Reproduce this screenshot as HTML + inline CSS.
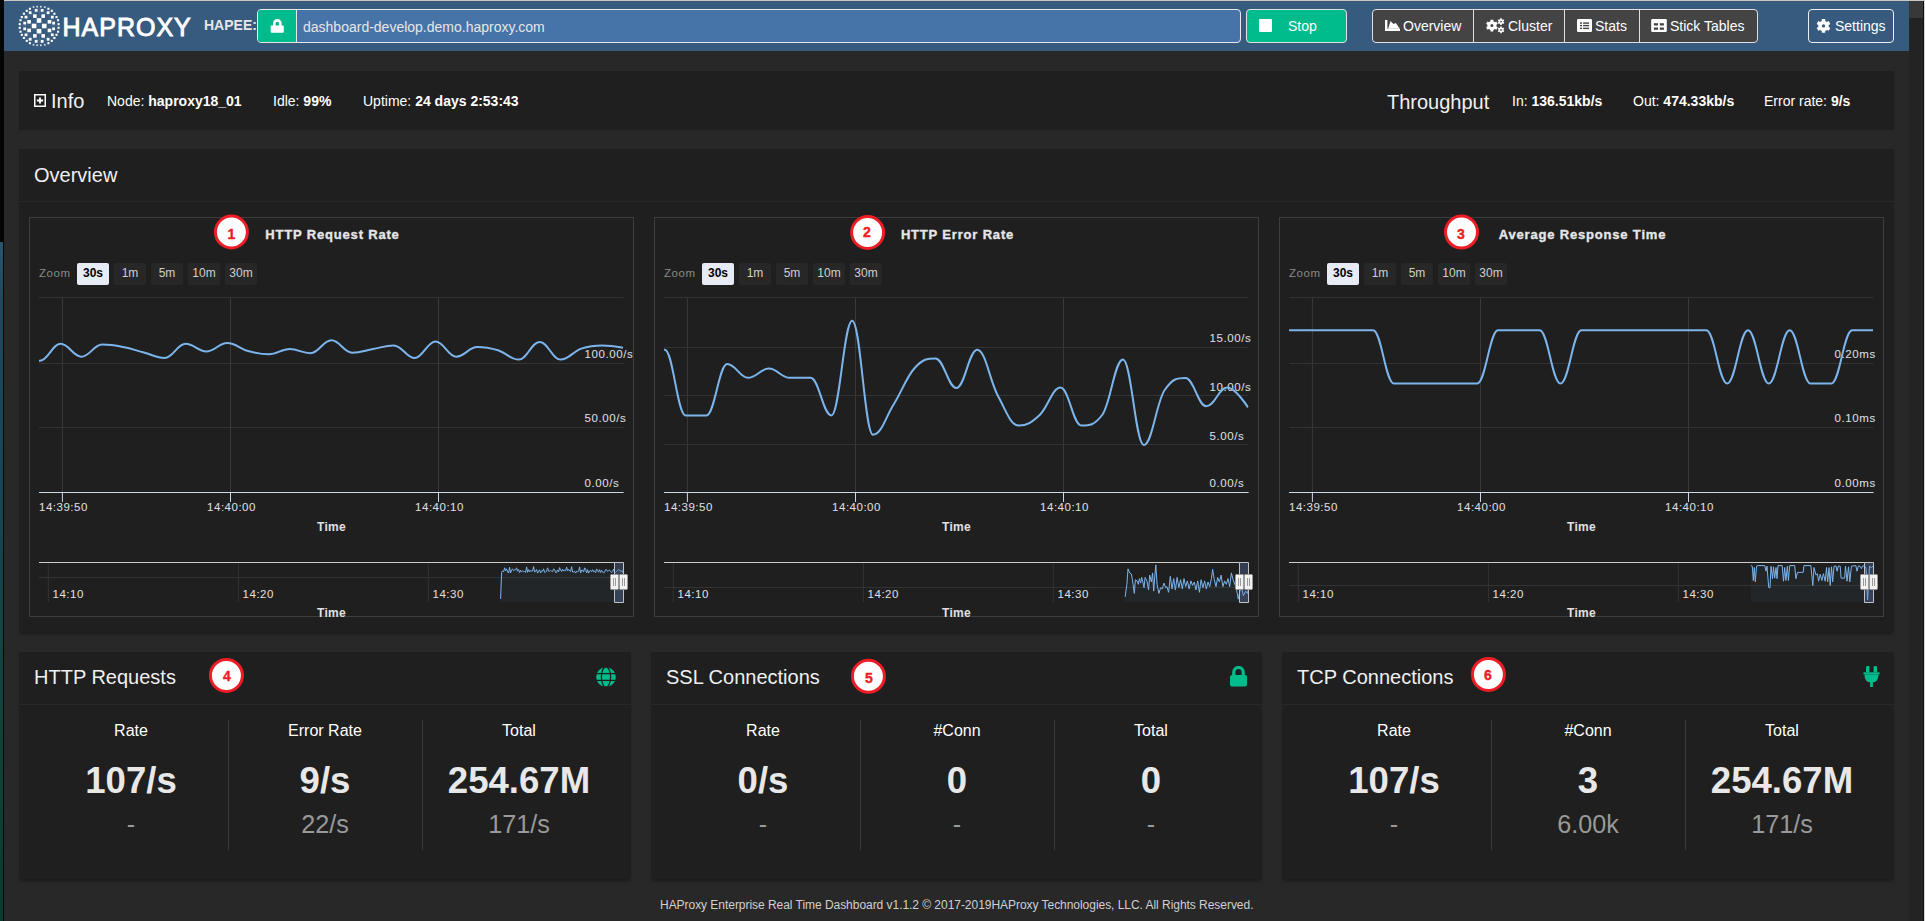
<!DOCTYPE html>
<html><head><meta charset="utf-8"><title>HAProxy Dashboard</title>
<style>
*{box-sizing:border-box}
html,body{margin:0;padding:0;width:1925px;height:921px;overflow:hidden;background:#282828;font-family:"Liberation Sans",sans-serif;color:#fff}
.abs{position:absolute}
#topline{left:0;top:0;width:1925px;height:1px;background:#c9c6c4}
#lstrip{left:0;top:0;width:4px;height:921px;background:#050505}
#lstrip2{left:0;top:242px;width:3px;height:679px;background:linear-gradient(#2a566b 0,#1b4b5b 9%,#194555 35%,#114236 75%,#0b3a2e)}
#nav{left:4px;top:1px;width:1905px;height:50px;background:#375a7f}
#sb{left:1909px;top:1px;width:15px;height:920px;background:#232323}
#sbtop{left:1909px;top:1px;width:15px;height:17px;background:#383838}
#sbedge{left:1923px;top:1px;width:1px;height:920px;background:#111}
#rline{left:1924px;top:0;width:1px;height:921px;background:#d4d4d4}
.brand{left:62.5px;top:11.5px;font:25px "Liberation Sans",sans-serif;-webkit-text-stroke:0.9px #fff;letter-spacing:1px;color:#fff;line-height:30px}
.hapee{left:204px;top:17px;font:bold 14px "Liberation Sans",sans-serif;color:#e6e6e6;line-height:16px}
.ig{left:257px;top:9px;width:984px;height:34px;border:1px solid #e8e8e8;border-radius:4px;overflow:hidden;background:#4673a8}
.ig .lock{position:absolute;left:0;top:0;width:39px;height:32px;background:#00bc8c;border-right:1px solid #e8e8e8}
.ig .url{position:absolute;left:45px;top:8.5px;font:14px "Liberation Sans",sans-serif;color:#e6e6e6;line-height:16px}
.btn-stop{left:1246px;top:9px;width:101px;height:34px;border:1px solid #e0e0e0;border-radius:4px;background:#00bc8c}
.btn-stop .sq{position:absolute;left:12px;top:9px;width:13px;height:13px;background:#fff;border-radius:1px}
.btn-stop .t{position:absolute;left:41px;top:8px;font:14px "Liberation Sans",sans-serif;color:#fff;line-height:16px}
.grp{left:1372px;top:9px;width:386px;height:34px;border:1px solid #e0e0e0;border-radius:4px;background:#444;overflow:hidden}
.grp .div{position:absolute;top:0;width:1px;height:32px;background:#e0e0e0}
.navt{position:absolute;font:14px "Liberation Sans",sans-serif;color:#fff;line-height:16px;top:8px;white-space:nowrap}
.btn-set{left:1808px;top:9px;width:86px;height:34px;border:1px solid #f0f0f0;border-radius:4px}
.card{position:absolute;background:#1f1f1f;box-shadow:0 3px 3px -1px rgba(0,0,0,.35)}
.t14{position:absolute;font:14px "Liberation Sans",sans-serif;color:#fff;line-height:16px;white-space:nowrap}
.t14 b{font-weight:bold}
.h20{position:absolute;font:20px "Liberation Sans",sans-serif;color:#f0f0f0;line-height:22px;white-space:nowrap}
.sep{position:absolute;width:1px;background:#3a3a3a;top:720px;height:130px}
.lab{position:absolute;width:194px;text-align:center;font:16px "Liberation Sans",sans-serif;color:#fff;line-height:18px;top:722px}
.big{position:absolute;width:194px;text-align:center;font:bold 36.6px "Liberation Sans",sans-serif;color:#e8e8e8;line-height:40px;top:761px}
.sub{position:absolute;width:194px;text-align:center;font:25.2px "Liberation Sans",sans-serif;color:#999;line-height:28px;top:809.6px}
.circ{position:absolute;width:34px;height:34px;border:2.8px solid #e3151d;border-radius:50%;background:#fff;color:#e3151d;font:bold 14px "Liberation Sans",sans-serif;text-align:center;line-height:28px}
.foot{left:660px;top:897.5px;font:12px "Liberation Sans",sans-serif;color:#d0d0d0;line-height:14px;white-space:nowrap;letter-spacing:-0.04px}
</style></head>
<body>
<div class="abs" id="topline"></div>
<div class="abs" id="nav"></div>
<div class="abs" id="lstrip"></div>
<div class="abs" id="lstrip2"></div>
<div class="abs" id="sb"></div>
<div class="abs" id="sbtop"></div>
<div class="abs" id="sbedge"></div>
<div class="abs" id="rline"></div>

<!-- navbar content -->
<svg style="position:absolute;left:0;top:0" width="70" height="52"><rect x="32.70" y="6.10" width="1.70" height="1.70" fill="#fff" opacity="0.8"/><rect x="36.35" y="5.84" width="1.70" height="1.70" fill="#fff" opacity="0.8"/><rect x="40.00" y="5.84" width="1.70" height="1.70" fill="#fff" opacity="0.8"/><rect x="43.91" y="6.36" width="1.70" height="1.70" fill="#fff" opacity="0.8"/><rect x="32.70" y="43.90" width="1.70" height="1.70" fill="#fff" opacity="0.8"/><rect x="36.35" y="44.42" width="1.70" height="1.70" fill="#fff" opacity="0.8"/><rect x="40.00" y="44.42" width="1.70" height="1.70" fill="#fff" opacity="0.8"/><rect x="43.91" y="43.90" width="1.70" height="1.70" fill="#fff" opacity="0.8"/><rect x="28.85" y="7.73" width="2.10" height="2.10" fill="#fff" opacity="1"/><rect x="47.36" y="7.73" width="2.10" height="2.10" fill="#fff" opacity="1"/><rect x="25.72" y="9.81" width="2.10" height="2.10" fill="#fff" opacity="1"/><rect x="50.75" y="9.81" width="2.10" height="2.10" fill="#fff" opacity="1"/><rect x="22.86" y="12.68" width="2.10" height="2.10" fill="#fff" opacity="1"/><rect x="53.36" y="12.68" width="2.10" height="2.10" fill="#fff" opacity="1"/><rect x="20.77" y="16.07" width="2.10" height="2.10" fill="#fff" opacity="1"/><rect x="55.44" y="16.07" width="2.10" height="2.10" fill="#fff" opacity="1"/><rect x="19.47" y="19.20" width="2.10" height="2.10" fill="#fff" opacity="1"/><rect x="57.01" y="19.20" width="2.10" height="2.10" fill="#fff" opacity="1"/><rect x="18.69" y="23.11" width="2.10" height="2.10" fill="#fff" opacity="1"/><rect x="57.53" y="23.11" width="2.10" height="2.10" fill="#fff" opacity="1"/><rect x="18.69" y="26.76" width="2.10" height="2.10" fill="#fff" opacity="1"/><rect x="57.53" y="26.76" width="2.10" height="2.10" fill="#fff" opacity="1"/><rect x="19.47" y="30.67" width="2.10" height="2.10" fill="#fff" opacity="1"/><rect x="57.01" y="30.67" width="2.10" height="2.10" fill="#fff" opacity="1"/><rect x="20.77" y="33.80" width="2.10" height="2.10" fill="#fff" opacity="1"/><rect x="55.44" y="33.80" width="2.10" height="2.10" fill="#fff" opacity="1"/><rect x="22.86" y="36.92" width="2.10" height="2.10" fill="#fff" opacity="1"/><rect x="53.36" y="36.92" width="2.10" height="2.10" fill="#fff" opacity="1"/><rect x="25.72" y="39.79" width="2.10" height="2.10" fill="#fff" opacity="1"/><rect x="50.75" y="39.79" width="2.10" height="2.10" fill="#fff" opacity="1"/><rect x="28.85" y="42.14" width="2.10" height="2.10" fill="#fff" opacity="1"/><rect x="47.36" y="42.14" width="2.10" height="2.10" fill="#fff" opacity="1"/><rect x="34.76" y="8.94" width="2.80" height="2.80" fill="#fff" opacity="1"/><rect x="40.75" y="8.94" width="2.80" height="2.80" fill="#fff" opacity="1"/><rect x="28.76" y="11.29" width="2.80" height="2.80" fill="#fff" opacity="1"/><rect x="46.75" y="11.29" width="2.80" height="2.80" fill="#fff" opacity="1"/><rect x="24.59" y="15.72" width="2.80" height="2.80" fill="#fff" opacity="1"/><rect x="50.92" y="15.72" width="2.80" height="2.80" fill="#fff" opacity="1"/><rect x="23.29" y="21.72" width="2.80" height="2.80" fill="#fff" opacity="1"/><rect x="52.22" y="21.72" width="2.80" height="2.80" fill="#fff" opacity="1"/><rect x="23.29" y="27.45" width="2.80" height="2.80" fill="#fff" opacity="1"/><rect x="52.22" y="27.45" width="2.80" height="2.80" fill="#fff" opacity="1"/><rect x="24.59" y="33.45" width="2.80" height="2.80" fill="#fff" opacity="1"/><rect x="50.92" y="33.45" width="2.80" height="2.80" fill="#fff" opacity="1"/><rect x="28.76" y="37.88" width="2.80" height="2.80" fill="#fff" opacity="1"/><rect x="46.75" y="37.88" width="2.80" height="2.80" fill="#fff" opacity="1"/><rect x="34.76" y="39.96" width="2.80" height="2.80" fill="#fff" opacity="1"/><rect x="40.75" y="39.96" width="2.80" height="2.80" fill="#fff" opacity="1"/><rect x="33.06" y="14.28" width="3.60" height="3.60" fill="#fff" opacity="1"/><rect x="41.40" y="14.28" width="3.60" height="3.60" fill="#fff" opacity="1"/><rect x="27.32" y="20.01" width="3.60" height="3.60" fill="#fff" opacity="1"/><rect x="47.65" y="20.01" width="3.60" height="3.60" fill="#fff" opacity="1"/><rect x="27.32" y="28.62" width="3.60" height="3.60" fill="#fff" opacity="1"/><rect x="47.65" y="28.62" width="3.60" height="3.60" fill="#fff" opacity="1"/><rect x="33.06" y="34.09" width="3.60" height="3.60" fill="#fff" opacity="1"/><rect x="41.40" y="34.09" width="3.60" height="3.60" fill="#fff" opacity="1"/><rect x="36.73" y="18.21" width="4.60" height="4.60" fill="#fff" opacity="1"/><rect x="31.77" y="23.68" width="4.60" height="4.60" fill="#fff" opacity="1"/><rect x="41.94" y="23.68" width="4.60" height="4.60" fill="#fff" opacity="1"/><rect x="36.73" y="28.90" width="4.60" height="4.60" fill="#fff" opacity="1"/><g stroke="#fff" stroke-opacity="0.12" stroke-width="0.8" fill="none"><circle cx="39.2" cy="25.8" r="14"/><line x1="21" y1="25.8" x2="57" y2="25.8"/><line x1="39.2" y1="7" x2="39.2" y2="45"/></g></svg>
<div class="abs brand">HAPROXY</div>
<div class="abs hapee">HAPEE:</div>
<div class="abs ig">
  <div class="lock">
    <svg style="position:absolute;left:12px;top:7px" width="15" height="17" viewBox="0 0 15 17"><path d="M4.25 9V6.45A3.05 3.05 0 0 1 10.35 6.45V9" fill="none" stroke="#fff" stroke-width="2.6"/><rect x="0.7" y="8.6" width="13.1" height="7.1" rx="1" fill="#fff"/></svg>
  </div>
  <div class="url">dashboard-develop.demo.haproxy.com</div>
</div>
<div class="abs btn-stop"><div class="sq"></div><div class="t">Stop</div></div>
<div class="abs grp">
  <div class="div" style="left:100px"></div>
  <div class="div" style="left:191px"></div>
  <div class="div" style="left:266px"></div>
  <svg style="position:absolute;left:12px;top:10px" width="15" height="11" viewBox="0 0 15 11"><g fill="#fff"><rect x="0" y="0" width="2.4" height="11"/><rect x="0" y="8.7" width="15" height="2.3"/><path d="M3.2 8.8L5.5 0.9 8.4 4.1 10.8 2.9 14.8 8.8z"/></g></svg>
  <div class="navt" style="left:30px">Overview</div>
  <svg style="position:absolute;left:112px;top:8px" width="20" height="16" viewBox="0 0 20 16"><path fill="#fff" fill-rule="evenodd" d="M5.41 3.25 L5.48 1.67 L8.32 1.67 L8.39 3.25 L9.92 4.13 L11.32 3.40 L12.75 5.87 L11.41 6.71 L11.41 8.49 L12.75 9.33 L11.32 11.80 L9.92 11.07 L8.39 11.95 L8.32 13.53 L5.48 13.53 L5.41 11.95 L3.88 11.07 L2.48 11.80 L1.05 9.33 L2.39 8.49 L2.39 6.71 L1.05 5.87 L2.48 3.40 L3.88 4.13ZM5.40 7.60 a1.50 1.50 0 1 0 3.00 0 a1.50 1.50 0 1 0 -3.00 0ZM15.19 1.23 L15.21 0.29 L16.79 0.29 L16.81 1.23 L17.64 1.72 L18.47 1.26 L19.26 2.63 L18.45 3.12 L18.45 4.08 L19.26 4.57 L18.47 5.94 L17.64 5.48 L16.81 5.97 L16.79 6.91 L15.21 6.91 L15.19 5.97 L14.36 5.48 L13.53 5.94 L12.74 4.57 L13.55 4.08 L13.55 3.12 L12.74 2.63 L13.53 1.26 L14.36 1.72ZM15.10 3.60 a0.90 0.90 0 1 0 1.80 0 a0.90 0.90 0 1 0 -1.80 0ZM15.19 9.53 L15.21 8.59 L16.79 8.59 L16.81 9.53 L17.64 10.02 L18.47 9.56 L19.26 10.93 L18.45 11.42 L18.45 12.38 L19.26 12.87 L18.47 14.24 L17.64 13.78 L16.81 14.27 L16.79 15.21 L15.21 15.21 L15.19 14.27 L14.36 13.78 L13.53 14.24 L12.74 12.87 L13.55 12.38 L13.55 11.42 L12.74 10.93 L13.53 9.56 L14.36 10.02ZM15.10 11.90 a0.90 0.90 0 1 0 1.80 0 a0.90 0.90 0 1 0 -1.80 0Z"/></svg>
  <div class="navt" style="left:135px">Cluster</div>
  <svg style="position:absolute;left:204px;top:9px" width="15" height="13" viewBox="0 0 15 13"><rect x="0" y="0" width="15" height="13" rx="1.2" fill="#fff"/><g fill="#444"><rect x="3" y="3.4" width="2" height="1.4"/><rect x="3" y="5.9" width="2" height="1.4"/><rect x="3" y="8.7" width="2" height="1.4"/><rect x="6.1" y="3.4" width="6" height="1.4"/><rect x="6.1" y="5.9" width="6" height="1.4"/><rect x="6.1" y="8.7" width="6" height="1.4"/></g></svg>
  <div class="navt" style="left:222px">Stats</div>
  <svg style="position:absolute;left:278px;top:9px" width="16" height="13" viewBox="0 0 16 13"><rect x="0.2" y="0" width="15.6" height="13" rx="1.2" fill="#fff"/><g fill="#444"><rect x="2.9" y="4.2" width="4.1" height="2.3"/><rect x="8.8" y="4.2" width="4.1" height="2.3"/><rect x="2.9" y="8.5" width="4.1" height="2.3"/><rect x="8.8" y="8.5" width="4.1" height="2.3"/></g></svg>
  <div class="navt" style="left:297px">Stick Tables</div>
</div>
<div class="abs btn-set">
  <svg style="position:absolute;left:7px;top:9px" width="16" height="15" viewBox="0 0 16 15"><path fill="#fff" fill-rule="evenodd" d="M5.78 1.89 L5.84 -0.00 L9.16 -0.00 L9.22 1.89 L10.98 2.91 L12.65 2.01 L14.31 4.88 L12.70 5.88 L12.70 7.92 L14.31 8.92 L12.65 11.79 L10.98 10.89 L9.22 11.91 L9.16 13.80 L5.84 13.80 L5.78 11.91 L4.02 10.89 L2.35 11.79 L0.69 8.92 L2.30 7.92 L2.30 5.88 L0.69 4.88 L2.35 2.01 L4.02 2.91ZM5.80 6.90 a1.70 1.70 0 1 0 3.40 0 a1.70 1.70 0 1 0 -3.40 0Z"/></svg>
  <div class="navt" style="left:26px">Settings</div>
</div>

<!-- Info card -->
<div class="card" style="left:19px;top:71px;width:1875px;height:58px;box-shadow:0 1px 1px rgba(0,0,0,.2)"></div>
<svg class="abs" style="left:34px;top:94px" width="12" height="13" viewBox="0 0 12 13"><rect x="0.75" y="0.75" width="10.5" height="11.5" fill="none" stroke="#fff" stroke-width="1.5"/><path d="M6 3.4v6.2M2.9 6.5h6.2" stroke="#fff" stroke-width="1.9"/></svg>
<div class="h20" style="left:51px;top:90px">Info</div>
<div class="t14" style="left:107px;top:93px">Node: <b>haproxy18_01</b></div>
<div class="t14" style="left:273px;top:93px">Idle: <b>99%</b></div>
<div class="t14" style="left:363px;top:93px">Uptime: <b>24 days 2:53:43</b></div>
<div class="h20" style="left:1387px;top:91px">Throughput</div>
<div class="t14" style="left:1512px;top:93px">In: <b>136.51kb/s</b></div>
<div class="t14" style="left:1633px;top:93px">Out: <b>474.33kb/s</b></div>
<div class="t14" style="left:1764px;top:93px">Error rate: <b>9/s</b></div>

<!-- Overview card -->
<div class="card" style="left:19px;top:149px;width:1875px;height:483px"></div>
<div class="abs" style="left:19px;top:201px;width:1875px;height:1px;background:#282828"></div>
<div class="h20" style="left:34px;top:164px">Overview</div>
<svg class="abs" style="left:0;top:0" width="1925" height="921" font-family="Liberation Sans, sans-serif"><rect x="29.5" y="217.5" width="604.0" height="399.0" fill="none" stroke="#3d3d3d" stroke-width="1"/><text x="332.5" y="238.8" text-anchor="middle" font-size="13" font-weight="bold" fill="#e6e6e8" stroke="#e6e6e8" stroke-width="0.35" letter-spacing="0.82">HTTP Request Rate</text><text x="39.0" y="277.3" font-size="11.5" fill="#8a8a8a" letter-spacing="0.6">Zoom</text><rect x="77.0" y="263" width="32" height="22" rx="2" fill="#e6ebf5"/><text x="93.0" y="277.1" text-anchor="middle" font-size="12" font-weight="bold" fill="#000">30s</text><rect x="114.0" y="263" width="32" height="22" rx="2" fill="#272727"/><text x="130.0" y="277.1" text-anchor="middle" font-size="12" fill="#cfcfcf">1m</text><rect x="151.0" y="263" width="32" height="22" rx="2" fill="#272727"/><text x="167.0" y="277.1" text-anchor="middle" font-size="12" fill="#cfcfcf">5m</text><rect x="188.0" y="263" width="32" height="22" rx="2" fill="#272727"/><text x="204.0" y="277.1" text-anchor="middle" font-size="12" fill="#cfcfcf">10m</text><rect x="225.0" y="263" width="32" height="22" rx="2" fill="#272727"/><text x="241.0" y="277.1" text-anchor="middle" font-size="12" fill="#cfcfcf">30m</text><line x1="62.4" y1="297" x2="62.4" y2="492" stroke="#3a3a3a" stroke-width="1"/><line x1="230.5" y1="297" x2="230.5" y2="492" stroke="#3a3a3a" stroke-width="1"/><line x1="438.5" y1="297" x2="438.5" y2="492" stroke="#3a3a3a" stroke-width="1"/><line x1="39.0" y1="297.5" x2="623.6" y2="297.5" stroke="#333" stroke-width="1"/><line x1="39.0" y1="363.5" x2="623.6" y2="363.5" stroke="#333" stroke-width="1"/><line x1="39.0" y1="427.5" x2="623.6" y2="427.5" stroke="#333" stroke-width="1"/><line x1="39.0" y1="492.5" x2="623.6" y2="492.5" stroke="#ccd6eb" stroke-width="1"/><line x1="62.4" y1="492" x2="62.4" y2="502" stroke="#ccd6eb" stroke-width="1"/><line x1="230.5" y1="492" x2="230.5" y2="502" stroke="#ccd6eb" stroke-width="1"/><line x1="438.5" y1="492" x2="438.5" y2="502" stroke="#ccd6eb" stroke-width="1"/><text x="63.4" y="511" text-anchor="middle" font-size="11.5" fill="#e0e0e3" letter-spacing="0.5">14:39:50</text><text x="231.5" y="511" text-anchor="middle" font-size="11.5" fill="#e0e0e3" letter-spacing="0.5">14:40:00</text><text x="439.5" y="511" text-anchor="middle" font-size="11.5" fill="#e0e0e3" letter-spacing="0.5">14:40:10</text><text x="331.5" y="531" text-anchor="middle" font-size="12" font-weight="bold" fill="#e0e0e3" letter-spacing="0.3">Time</text><text x="584.5" y="358.3" font-size="11.5" fill="#e0e0e3" letter-spacing="0.6">100.00/s</text><text x="584.5" y="422.3" font-size="11.5" fill="#e0e0e3" letter-spacing="0.6">50.00/s</text><text x="584.5" y="487.3" font-size="11.5" fill="#e0e0e3" letter-spacing="0.6">0.00/s</text><clipPath id="c29"><rect x="39.0" y="297" width="584.6" height="196"/></clipPath><path d="M18.9 352.0C18.9 352.0 31.4 360.7 39.8 360.7C48.1 360.7 52.2 343.8 60.6 343.8C68.9 343.8 73.1 356.7 81.4 356.7C89.7 356.7 93.9 344.6 102.2 344.6C110.6 344.6 114.7 345.4 123.1 347.0C131.4 348.6 135.6 350.3 143.9 352.5C152.2 354.7 156.4 358.0 164.7 358.0C173.1 358.0 177.2 343.8 185.6 343.8C193.9 343.8 198.1 351.5 206.4 351.5C214.7 351.5 218.9 343.0 227.2 343.0C235.6 343.0 239.7 348.7 248.0 351.0C256.4 353.3 260.5 354.3 268.9 354.3C277.2 354.3 281.4 349.0 289.7 349.0C298.0 349.0 302.2 353.2 310.5 353.2C318.9 353.2 323.0 340.3 331.4 340.3C339.7 340.3 343.9 352.7 352.2 352.7C360.5 352.7 364.7 350.5 373.0 349.0C381.4 347.5 385.5 345.4 393.9 345.4C402.2 345.4 406.4 358.0 414.7 358.0C423.0 358.0 427.2 341.4 435.5 341.4C443.9 341.4 448.0 356.7 456.3 356.7C464.7 356.7 468.8 347.0 477.2 347.0C485.5 347.0 489.7 347.8 498.0 350.3C506.3 352.8 510.5 359.6 518.8 359.6C527.2 359.6 531.3 341.9 539.7 341.9C548.0 341.9 552.2 359.6 560.5 359.6C568.8 359.6 573.0 351.4 581.3 348.6C589.7 345.8 593.8 345.4 602.2 345.4C610.5 345.4 623.0 347.8 623.0 347.8" fill="none" stroke="#7cb5ec" stroke-width="2" stroke-linejoin="round" clip-path="url(#c29)"/><line x1="48.3" y1="562.5" x2="48.3" y2="602.0" stroke="#333" stroke-width="1"/><line x1="238.4" y1="562.5" x2="238.4" y2="602.0" stroke="#333" stroke-width="1"/><line x1="428.3" y1="562.5" x2="428.3" y2="602.0" stroke="#333" stroke-width="1"/><line x1="39.0" y1="577.5" x2="623.6" y2="577.5" stroke="#333" stroke-width="1"/><text x="52.5" y="598" font-size="11.5" fill="#e0e0e3" letter-spacing="0.5">14:10</text><text x="242.6" y="598" font-size="11.5" fill="#e0e0e3" letter-spacing="0.5">14:20</text><text x="432.5" y="598" font-size="11.5" fill="#e0e0e3" letter-spacing="0.5">14:30</text><clipPath id="p29"><rect x="29.0" y="217" width="604" height="399"/></clipPath><text x="331.5" y="617" text-anchor="middle" font-size="12" font-weight="bold" fill="#e0e0e3" letter-spacing="0.3">Time</text><path d="M500.6 599.0L501.6 572.2L502.6 571.0L503.6 571.7L504.6 567.8L505.6 570.7L506.6 568.8L507.6 572.0L508.6 573.0L509.6 567.3L510.6 572.9L511.6 569.8L512.6 568.9L513.6 570.7L514.6 569.8L515.6 569.8L516.6 567.8L517.6 571.2L518.6 569.6L519.6 572.6L520.6 570.3L521.6 571.9L522.6 570.7L523.6 571.7L524.6 571.4L525.6 572.5L526.6 566.9L527.6 572.3L528.6 569.6L529.6 571.9L530.6 570.4L531.6 571.0L532.6 571.1L533.6 566.6L534.6 571.9L535.6 571.4L536.6 569.5L537.6 573.1L538.6 571.2L539.6 569.8L540.6 573.0L541.6 570.8L542.6 571.2L543.6 568.8L544.6 572.4L545.6 572.1L546.6 571.1L547.6 567.8L548.6 571.3L549.6 571.0L550.6 570.4L551.6 571.2L552.6 571.5L553.6 568.9L554.6 569.6L555.6 572.6L556.6 572.3L557.6 569.9L558.6 571.8L559.6 567.6L560.6 569.9L561.6 571.5L562.6 569.1L563.6 571.1L564.6 570.0L565.6 570.8L566.6 567.1L567.6 570.7L568.6 569.3L569.6 571.0L570.6 571.5L571.6 566.7L572.6 572.0L573.6 571.9L574.6 571.2L575.6 573.1L576.6 571.1L577.6 571.7L578.6 571.3L579.6 566.9L580.6 573.1L581.6 570.1L582.6 570.2L583.6 572.1L584.6 567.8L585.6 569.0L586.6 573.0L587.6 569.6L588.6 573.1L589.6 571.0L590.6 570.3L591.6 571.8L592.6 569.7L593.6 571.7L594.6 571.0L595.6 572.6L596.6 568.9L597.6 570.2L598.6 572.2L599.6 569.7L600.6 572.5L601.6 570.3L602.6 571.8L603.6 573.1L604.6 572.0L605.6 569.5L606.6 569.7L607.6 571.4L608.6 570.4L609.6 570.1L610.6 571.5L611.6 572.7L612.6 571.2L613.6 569.0L614.6 572.6L615.6 572.4L616.6 571.5L617.6 570.5L618.6 569.8L619.6 570.0L620.6 571.3L621.6 570.8L622.6 572.3L623.6 568.9L623.6 602.0 L500.6 602.0 Z" fill="#7cb5ec" fill-opacity="0.05" stroke="none"/><path d="M500.6 599.0L501.6 572.2L502.6 571.0L503.6 571.7L504.6 567.8L505.6 570.7L506.6 568.8L507.6 572.0L508.6 573.0L509.6 567.3L510.6 572.9L511.6 569.8L512.6 568.9L513.6 570.7L514.6 569.8L515.6 569.8L516.6 567.8L517.6 571.2L518.6 569.6L519.6 572.6L520.6 570.3L521.6 571.9L522.6 570.7L523.6 571.7L524.6 571.4L525.6 572.5L526.6 566.9L527.6 572.3L528.6 569.6L529.6 571.9L530.6 570.4L531.6 571.0L532.6 571.1L533.6 566.6L534.6 571.9L535.6 571.4L536.6 569.5L537.6 573.1L538.6 571.2L539.6 569.8L540.6 573.0L541.6 570.8L542.6 571.2L543.6 568.8L544.6 572.4L545.6 572.1L546.6 571.1L547.6 567.8L548.6 571.3L549.6 571.0L550.6 570.4L551.6 571.2L552.6 571.5L553.6 568.9L554.6 569.6L555.6 572.6L556.6 572.3L557.6 569.9L558.6 571.8L559.6 567.6L560.6 569.9L561.6 571.5L562.6 569.1L563.6 571.1L564.6 570.0L565.6 570.8L566.6 567.1L567.6 570.7L568.6 569.3L569.6 571.0L570.6 571.5L571.6 566.7L572.6 572.0L573.6 571.9L574.6 571.2L575.6 573.1L576.6 571.1L577.6 571.7L578.6 571.3L579.6 566.9L580.6 573.1L581.6 570.1L582.6 570.2L583.6 572.1L584.6 567.8L585.6 569.0L586.6 573.0L587.6 569.6L588.6 573.1L589.6 571.0L590.6 570.3L591.6 571.8L592.6 569.7L593.6 571.7L594.6 571.0L595.6 572.6L596.6 568.9L597.6 570.2L598.6 572.2L599.6 569.7L600.6 572.5L601.6 570.3L602.6 571.8L603.6 573.1L604.6 572.0L605.6 569.5L606.6 569.7L607.6 571.4L608.6 570.4L609.6 570.1L610.6 571.5L611.6 572.7L612.6 571.2L613.6 569.0L614.6 572.6L615.6 572.4L616.6 571.5L617.6 570.5L618.6 569.8L619.6 570.0L620.6 571.3L621.6 570.8L622.6 572.3L623.6 568.9" fill="none" stroke="#7cb5ec" stroke-width="1"/><path d="M39.0 562.5 L614.5 562.5 L614.5 602.5 L623.5 602.5 L623.5 562.5" fill="none" stroke="#cccccc" stroke-width="1"/><line x1="614.5" y1="562.5" x2="623.5" y2="562.5" stroke="#cccccc" stroke-width="1"/><rect x="614.5" y="562.5" width="9" height="40.0" fill="#6685c2" fill-opacity="0.3"/><rect x="610.5" y="574.5" width="8" height="15" rx="1" fill="#f2f2f2" stroke="#999" stroke-width="1"/><line x1="613.5" y1="578" x2="613.5" y2="586" stroke="#999" stroke-width="1"/><line x1="615.5" y1="578" x2="615.5" y2="586" stroke="#999" stroke-width="1"/><rect x="619.5" y="574.5" width="8" height="15" rx="1" fill="#f2f2f2" stroke="#999" stroke-width="1"/><line x1="622.5" y1="578" x2="622.5" y2="586" stroke="#999" stroke-width="1"/><line x1="624.5" y1="578" x2="624.5" y2="586" stroke="#999" stroke-width="1"/><rect x="654.5" y="217.5" width="604.0" height="399.0" fill="none" stroke="#3d3d3d" stroke-width="1"/><text x="957.5" y="238.8" text-anchor="middle" font-size="13" font-weight="bold" fill="#e6e6e8" stroke="#e6e6e8" stroke-width="0.35" letter-spacing="0.82">HTTP Error Rate</text><text x="664.0" y="277.3" font-size="11.5" fill="#8a8a8a" letter-spacing="0.6">Zoom</text><rect x="702.0" y="263" width="32" height="22" rx="2" fill="#e6ebf5"/><text x="718.0" y="277.1" text-anchor="middle" font-size="12" font-weight="bold" fill="#000">30s</text><rect x="739.0" y="263" width="32" height="22" rx="2" fill="#272727"/><text x="755.0" y="277.1" text-anchor="middle" font-size="12" fill="#cfcfcf">1m</text><rect x="776.0" y="263" width="32" height="22" rx="2" fill="#272727"/><text x="792.0" y="277.1" text-anchor="middle" font-size="12" fill="#cfcfcf">5m</text><rect x="813.0" y="263" width="32" height="22" rx="2" fill="#272727"/><text x="829.0" y="277.1" text-anchor="middle" font-size="12" fill="#cfcfcf">10m</text><rect x="850.0" y="263" width="32" height="22" rx="2" fill="#272727"/><text x="866.0" y="277.1" text-anchor="middle" font-size="12" fill="#cfcfcf">30m</text><line x1="687.4" y1="297" x2="687.4" y2="492" stroke="#3a3a3a" stroke-width="1"/><line x1="855.5" y1="297" x2="855.5" y2="492" stroke="#3a3a3a" stroke-width="1"/><line x1="1063.5" y1="297" x2="1063.5" y2="492" stroke="#3a3a3a" stroke-width="1"/><line x1="664.0" y1="297.5" x2="1248.6" y2="297.5" stroke="#333" stroke-width="1"/><line x1="664.0" y1="347.5" x2="1248.6" y2="347.5" stroke="#333" stroke-width="1"/><line x1="664.0" y1="395.5" x2="1248.6" y2="395.5" stroke="#333" stroke-width="1"/><line x1="664.0" y1="444.5" x2="1248.6" y2="444.5" stroke="#333" stroke-width="1"/><line x1="664.0" y1="492.5" x2="1248.6" y2="492.5" stroke="#ccd6eb" stroke-width="1"/><line x1="687.4" y1="492" x2="687.4" y2="502" stroke="#ccd6eb" stroke-width="1"/><line x1="855.5" y1="492" x2="855.5" y2="502" stroke="#ccd6eb" stroke-width="1"/><line x1="1063.5" y1="492" x2="1063.5" y2="502" stroke="#ccd6eb" stroke-width="1"/><text x="688.4" y="511" text-anchor="middle" font-size="11.5" fill="#e0e0e3" letter-spacing="0.5">14:39:50</text><text x="856.5" y="511" text-anchor="middle" font-size="11.5" fill="#e0e0e3" letter-spacing="0.5">14:40:00</text><text x="1064.5" y="511" text-anchor="middle" font-size="11.5" fill="#e0e0e3" letter-spacing="0.5">14:40:10</text><text x="956.5" y="531" text-anchor="middle" font-size="12" font-weight="bold" fill="#e0e0e3" letter-spacing="0.3">Time</text><text x="1209.5" y="342.3" font-size="11.5" fill="#e0e0e3" letter-spacing="0.6">15.00/s</text><text x="1209.5" y="390.8" font-size="11.5" fill="#e0e0e3" letter-spacing="0.6">10.00/s</text><text x="1209.5" y="439.5" font-size="11.5" fill="#e0e0e3" letter-spacing="0.6">5.00/s</text><text x="1209.5" y="487.3" font-size="11.5" fill="#e0e0e3" letter-spacing="0.6">0.00/s</text><clipPath id="c654"><rect x="664.0" y="297" width="584.6" height="196"/></clipPath><path d="M643.9 362.0C643.9 362.0 656.4 349.7 664.8 349.7C673.1 349.7 677.2 415.4 685.6 415.4C693.9 415.4 698.1 415.4 706.4 415.4C714.7 415.4 718.9 364.0 727.2 364.0C735.6 364.0 739.7 377.8 748.1 377.8C756.4 377.8 760.6 368.6 768.9 368.6C777.2 368.6 781.4 377.8 789.7 377.8C798.1 377.8 802.2 377.8 810.6 377.8C818.9 377.8 823.1 415.4 831.4 415.4C839.7 415.4 843.9 320.8 852.2 320.8C860.6 320.8 864.7 434.7 873.0 434.7C881.4 434.7 885.5 417.3 893.9 404.0C902.2 390.7 906.4 377.1 914.7 368.0C923.0 358.9 927.2 358.4 935.5 358.4C943.9 358.4 948.0 388.0 956.4 388.0C964.7 388.0 968.9 349.7 977.2 349.7C985.5 349.7 989.7 380.8 998.0 396.0C1006.4 411.2 1010.5 425.6 1018.9 425.6C1027.2 425.6 1031.4 422.6 1039.7 415.0C1048.0 407.4 1052.2 387.6 1060.5 387.6C1068.9 387.6 1073.0 425.6 1081.3 425.6C1089.7 425.6 1093.8 425.6 1102.2 415.0C1110.5 404.4 1114.7 359.5 1123.0 359.5C1131.3 359.5 1135.5 445.0 1143.8 445.0C1152.2 445.0 1156.3 402.0 1164.7 390.0C1173.0 378.0 1177.2 378.0 1185.5 378.0C1193.8 378.0 1198.0 406.3 1206.3 406.3C1214.7 406.3 1218.8 387.6 1227.2 387.6C1235.5 387.6 1248.0 407.4 1248.0 407.4" fill="none" stroke="#7cb5ec" stroke-width="2" stroke-linejoin="round" clip-path="url(#c654)"/><line x1="673.3" y1="562.5" x2="673.3" y2="602.0" stroke="#333" stroke-width="1"/><line x1="863.4" y1="562.5" x2="863.4" y2="602.0" stroke="#333" stroke-width="1"/><line x1="1053.3" y1="562.5" x2="1053.3" y2="602.0" stroke="#333" stroke-width="1"/><line x1="664.0" y1="587.5" x2="1248.6" y2="587.5" stroke="#333" stroke-width="1"/><text x="677.5" y="598" font-size="11.5" fill="#e0e0e3" letter-spacing="0.5">14:10</text><text x="867.6" y="598" font-size="11.5" fill="#e0e0e3" letter-spacing="0.5">14:20</text><text x="1057.5" y="598" font-size="11.5" fill="#e0e0e3" letter-spacing="0.5">14:30</text><clipPath id="p654"><rect x="654.0" y="217" width="604" height="399"/></clipPath><text x="956.5" y="617" text-anchor="middle" font-size="12" font-weight="bold" fill="#e0e0e3" letter-spacing="0.3">Time</text><path d="M1125.1 596.9L1126.9 584.3L1128.0 568.9L1129.7 572.9L1131.4 574.0L1133.1 584.3L1134.3 593.4L1135.4 579.7L1137.1 580.9L1138.3 584.3L1139.4 578.6L1140.6 583.1L1141.7 577.4L1142.9 582.0L1144.0 587.7L1145.1 577.4L1146.9 580.9L1148.6 590.0L1149.7 575.1L1151.4 582.0L1152.6 572.9L1153.7 591.1L1154.9 575.1L1155.8 564.9L1157.1 584.3L1158.9 593.4L1160.6 587.7L1162.3 588.9L1164.0 583.1L1165.7 587.7L1166.9 586.6L1168.6 592.3L1170.3 576.3L1172.0 588.9L1173.7 578.6L1175.4 590.0L1177.1 577.4L1178.9 587.7L1180.6 579.7L1182.3 588.9L1184.0 578.6L1185.7 586.6L1187.4 580.9L1189.1 588.9L1190.9 580.9L1192.6 585.4L1194.3 582.0L1196.0 590.0L1197.7 580.9L1199.4 592.3L1201.1 579.7L1202.9 587.7L1204.6 580.9L1206.3 588.9L1208.0 582.0L1209.7 586.6L1211.4 578.6L1212.6 569.4L1214.3 579.7L1216.0 586.6L1217.7 577.4L1219.4 582.0L1221.1 575.1L1222.9 586.6L1224.6 580.9L1226.3 584.3L1228.0 578.6L1229.7 586.6L1231.4 572.9L1233.1 579.7L1234.9 584.3L1236.6 590.0L1238.3 599.1L1239.4 593.4L1241.1 585.4L1243.4 595.7L1245.7 591.1L1247.4 593.4L1248.9 587.7L1248.9 602.0 L1125.1 602.0 Z" fill="#7cb5ec" fill-opacity="0.05" stroke="none"/><path d="M1125.1 596.9L1126.9 584.3L1128.0 568.9L1129.7 572.9L1131.4 574.0L1133.1 584.3L1134.3 593.4L1135.4 579.7L1137.1 580.9L1138.3 584.3L1139.4 578.6L1140.6 583.1L1141.7 577.4L1142.9 582.0L1144.0 587.7L1145.1 577.4L1146.9 580.9L1148.6 590.0L1149.7 575.1L1151.4 582.0L1152.6 572.9L1153.7 591.1L1154.9 575.1L1155.8 564.9L1157.1 584.3L1158.9 593.4L1160.6 587.7L1162.3 588.9L1164.0 583.1L1165.7 587.7L1166.9 586.6L1168.6 592.3L1170.3 576.3L1172.0 588.9L1173.7 578.6L1175.4 590.0L1177.1 577.4L1178.9 587.7L1180.6 579.7L1182.3 588.9L1184.0 578.6L1185.7 586.6L1187.4 580.9L1189.1 588.9L1190.9 580.9L1192.6 585.4L1194.3 582.0L1196.0 590.0L1197.7 580.9L1199.4 592.3L1201.1 579.7L1202.9 587.7L1204.6 580.9L1206.3 588.9L1208.0 582.0L1209.7 586.6L1211.4 578.6L1212.6 569.4L1214.3 579.7L1216.0 586.6L1217.7 577.4L1219.4 582.0L1221.1 575.1L1222.9 586.6L1224.6 580.9L1226.3 584.3L1228.0 578.6L1229.7 586.6L1231.4 572.9L1233.1 579.7L1234.9 584.3L1236.6 590.0L1238.3 599.1L1239.4 593.4L1241.1 585.4L1243.4 595.7L1245.7 591.1L1247.4 593.4L1248.9 587.7" fill="none" stroke="#7cb5ec" stroke-width="1"/><path d="M664.0 562.5 L1239.5 562.5 L1239.5 602.5 L1248.5 602.5 L1248.5 562.5" fill="none" stroke="#cccccc" stroke-width="1"/><line x1="1239.5" y1="562.5" x2="1248.5" y2="562.5" stroke="#cccccc" stroke-width="1"/><rect x="1239.5" y="562.5" width="9" height="40.0" fill="#6685c2" fill-opacity="0.3"/><rect x="1235.5" y="574.5" width="8" height="15" rx="1" fill="#f2f2f2" stroke="#999" stroke-width="1"/><line x1="1238.5" y1="578" x2="1238.5" y2="586" stroke="#999" stroke-width="1"/><line x1="1240.5" y1="578" x2="1240.5" y2="586" stroke="#999" stroke-width="1"/><rect x="1244.5" y="574.5" width="8" height="15" rx="1" fill="#f2f2f2" stroke="#999" stroke-width="1"/><line x1="1247.5" y1="578" x2="1247.5" y2="586" stroke="#999" stroke-width="1"/><line x1="1249.5" y1="578" x2="1249.5" y2="586" stroke="#999" stroke-width="1"/><rect x="1279.5" y="217.5" width="604.0" height="399.0" fill="none" stroke="#3d3d3d" stroke-width="1"/><text x="1582.5" y="238.8" text-anchor="middle" font-size="13" font-weight="bold" fill="#e6e6e8" stroke="#e6e6e8" stroke-width="0.35" letter-spacing="0.82">Average Response Time</text><text x="1289.0" y="277.3" font-size="11.5" fill="#8a8a8a" letter-spacing="0.6">Zoom</text><rect x="1327.0" y="263" width="32" height="22" rx="2" fill="#e6ebf5"/><text x="1343.0" y="277.1" text-anchor="middle" font-size="12" font-weight="bold" fill="#000">30s</text><rect x="1364.0" y="263" width="32" height="22" rx="2" fill="#272727"/><text x="1380.0" y="277.1" text-anchor="middle" font-size="12" fill="#cfcfcf">1m</text><rect x="1401.0" y="263" width="32" height="22" rx="2" fill="#272727"/><text x="1417.0" y="277.1" text-anchor="middle" font-size="12" fill="#cfcfcf">5m</text><rect x="1438.0" y="263" width="32" height="22" rx="2" fill="#272727"/><text x="1454.0" y="277.1" text-anchor="middle" font-size="12" fill="#cfcfcf">10m</text><rect x="1475.0" y="263" width="32" height="22" rx="2" fill="#272727"/><text x="1491.0" y="277.1" text-anchor="middle" font-size="12" fill="#cfcfcf">30m</text><line x1="1312.4" y1="297" x2="1312.4" y2="492" stroke="#3a3a3a" stroke-width="1"/><line x1="1480.5" y1="297" x2="1480.5" y2="492" stroke="#3a3a3a" stroke-width="1"/><line x1="1688.5" y1="297" x2="1688.5" y2="492" stroke="#3a3a3a" stroke-width="1"/><line x1="1289.0" y1="297.5" x2="1873.6" y2="297.5" stroke="#333" stroke-width="1"/><line x1="1289.0" y1="363.5" x2="1873.6" y2="363.5" stroke="#333" stroke-width="1"/><line x1="1289.0" y1="427.5" x2="1873.6" y2="427.5" stroke="#333" stroke-width="1"/><line x1="1289.0" y1="492.5" x2="1873.6" y2="492.5" stroke="#ccd6eb" stroke-width="1"/><line x1="1312.4" y1="492" x2="1312.4" y2="502" stroke="#ccd6eb" stroke-width="1"/><line x1="1480.5" y1="492" x2="1480.5" y2="502" stroke="#ccd6eb" stroke-width="1"/><line x1="1688.5" y1="492" x2="1688.5" y2="502" stroke="#ccd6eb" stroke-width="1"/><text x="1313.4" y="511" text-anchor="middle" font-size="11.5" fill="#e0e0e3" letter-spacing="0.5">14:39:50</text><text x="1481.5" y="511" text-anchor="middle" font-size="11.5" fill="#e0e0e3" letter-spacing="0.5">14:40:00</text><text x="1689.5" y="511" text-anchor="middle" font-size="11.5" fill="#e0e0e3" letter-spacing="0.5">14:40:10</text><text x="1581.5" y="531" text-anchor="middle" font-size="12" font-weight="bold" fill="#e0e0e3" letter-spacing="0.3">Time</text><text x="1834.5" y="358.3" font-size="11.5" fill="#e0e0e3" letter-spacing="0.6">0.20ms</text><text x="1834.5" y="422.3" font-size="11.5" fill="#e0e0e3" letter-spacing="0.6">0.10ms</text><text x="1834.5" y="487.3" font-size="11.5" fill="#e0e0e3" letter-spacing="0.6">0.00ms</text><clipPath id="c1279"><rect x="1289.0" y="297" width="584.6" height="196"/></clipPath><path d="M1268.9 330.3C1268.9 330.3 1281.4 330.3 1289.8 330.3C1298.1 330.3 1302.2 330.3 1310.6 330.3C1318.9 330.3 1323.1 330.3 1331.4 330.3C1339.7 330.3 1343.9 330.3 1352.2 330.3C1360.6 330.3 1364.7 330.3 1373.1 330.3C1381.4 330.3 1385.6 383.5 1393.9 383.5C1402.2 383.5 1406.4 383.5 1414.7 383.5C1423.1 383.5 1427.2 383.5 1435.6 383.5C1443.9 383.5 1448.1 383.5 1456.4 383.5C1464.7 383.5 1468.9 383.5 1477.2 383.5C1485.6 383.5 1489.7 330.3 1498.0 330.3C1506.4 330.3 1510.5 330.3 1518.9 330.3C1527.2 330.3 1531.4 330.3 1539.7 330.3C1548.0 330.3 1552.2 383.5 1560.5 383.5C1568.9 383.5 1573.0 330.3 1581.4 330.3C1589.7 330.3 1593.9 330.3 1602.2 330.3C1610.5 330.3 1614.7 330.3 1623.0 330.3C1631.4 330.3 1635.5 330.3 1643.9 330.3C1652.2 330.3 1656.4 330.3 1664.7 330.3C1673.0 330.3 1677.2 330.3 1685.5 330.3C1693.9 330.3 1698.0 330.3 1706.3 330.3C1714.7 330.3 1718.8 383.5 1727.2 383.5C1735.5 383.5 1739.7 330.3 1748.0 330.3C1756.3 330.3 1760.5 383.5 1768.8 383.5C1777.2 383.5 1781.3 330.3 1789.7 330.3C1798.0 330.3 1802.2 383.5 1810.5 383.5C1818.8 383.5 1823.0 383.5 1831.3 383.5C1839.7 383.5 1843.8 330.3 1852.2 330.3C1860.5 330.3 1873.0 330.3 1873.0 330.3" fill="none" stroke="#7cb5ec" stroke-width="2" stroke-linejoin="round" clip-path="url(#c1279)"/><line x1="1298.3" y1="562.5" x2="1298.3" y2="602.0" stroke="#333" stroke-width="1"/><line x1="1488.4" y1="562.5" x2="1488.4" y2="602.0" stroke="#333" stroke-width="1"/><line x1="1678.3" y1="562.5" x2="1678.3" y2="602.0" stroke="#333" stroke-width="1"/><line x1="1289.0" y1="585.5" x2="1873.6" y2="585.5" stroke="#333" stroke-width="1"/><text x="1302.5" y="598" font-size="11.5" fill="#e0e0e3" letter-spacing="0.5">14:10</text><text x="1492.6" y="598" font-size="11.5" fill="#e0e0e3" letter-spacing="0.5">14:20</text><text x="1682.5" y="598" font-size="11.5" fill="#e0e0e3" letter-spacing="0.5">14:30</text><clipPath id="p1279"><rect x="1279.0" y="217" width="604" height="399"/></clipPath><text x="1581.5" y="617" text-anchor="middle" font-size="12" font-weight="bold" fill="#e0e0e3" letter-spacing="0.3">Time</text><path d="M1750.8 565.6L1752.3 566.2L1753.3 580.5L1754.3 567.5L1755.3 581.8L1756.6 566.2L1757.9 565.6L1764.8 565.6L1766.0 571.2L1767.0 566.0L1768.7 587.4L1770.0 588.0L1771.0 566.2L1772.5 578.7L1773.5 566.8L1774.7 578.1L1776.0 567.5L1777.0 578.7L1778.0 565.6L1782.2 565.6L1783.5 581.2L1784.7 567.5L1785.9 580.5L1787.4 566.0L1788.4 580.5L1789.7 565.6L1794.7 565.6L1795.9 578.7L1797.4 572.4L1803.2 572.4L1803.9 565.6L1810.9 565.6L1812.8 585.5L1814.0 567.5L1815.9 574.9L1817.4 573.7L1818.6 581.2L1820.2 574.3L1821.9 580.5L1823.4 573.7L1825.2 581.2L1826.5 567.5L1827.7 581.8L1829.0 567.5L1830.2 585.5L1831.5 566.8L1832.7 581.8L1834.0 566.2L1836.1 566.2L1837.1 571.2L1838.3 566.0L1840.2 566.2L1841.1 578.1L1844.6 578.1L1845.5 566.2L1847.0 581.2L1848.5 566.8L1849.8 581.8L1851.4 566.2L1855.8 565.6L1857.0 571.2L1858.3 566.0L1860.1 566.2L1861.4 568.7L1862.6 566.0L1864.5 565.6L1866.0 568.7L1867.6 599.9L1869.5 566.2L1871.4 567.5L1873.2 566.0L1873.2 602.0 L1750.8 602.0 Z" fill="#7cb5ec" fill-opacity="0.05" stroke="none"/><path d="M1750.8 565.6L1752.3 566.2L1753.3 580.5L1754.3 567.5L1755.3 581.8L1756.6 566.2L1757.9 565.6L1764.8 565.6L1766.0 571.2L1767.0 566.0L1768.7 587.4L1770.0 588.0L1771.0 566.2L1772.5 578.7L1773.5 566.8L1774.7 578.1L1776.0 567.5L1777.0 578.7L1778.0 565.6L1782.2 565.6L1783.5 581.2L1784.7 567.5L1785.9 580.5L1787.4 566.0L1788.4 580.5L1789.7 565.6L1794.7 565.6L1795.9 578.7L1797.4 572.4L1803.2 572.4L1803.9 565.6L1810.9 565.6L1812.8 585.5L1814.0 567.5L1815.9 574.9L1817.4 573.7L1818.6 581.2L1820.2 574.3L1821.9 580.5L1823.4 573.7L1825.2 581.2L1826.5 567.5L1827.7 581.8L1829.0 567.5L1830.2 585.5L1831.5 566.8L1832.7 581.8L1834.0 566.2L1836.1 566.2L1837.1 571.2L1838.3 566.0L1840.2 566.2L1841.1 578.1L1844.6 578.1L1845.5 566.2L1847.0 581.2L1848.5 566.8L1849.8 581.8L1851.4 566.2L1855.8 565.6L1857.0 571.2L1858.3 566.0L1860.1 566.2L1861.4 568.7L1862.6 566.0L1864.5 565.6L1866.0 568.7L1867.6 599.9L1869.5 566.2L1871.4 567.5L1873.2 566.0" fill="none" stroke="#7cb5ec" stroke-width="1"/><path d="M1289.0 562.5 L1864.5 562.5 L1864.5 602.5 L1873.5 602.5 L1873.5 562.5" fill="none" stroke="#cccccc" stroke-width="1"/><line x1="1864.5" y1="562.5" x2="1873.5" y2="562.5" stroke="#cccccc" stroke-width="1"/><rect x="1864.5" y="562.5" width="9" height="40.0" fill="#6685c2" fill-opacity="0.3"/><rect x="1860.5" y="574.5" width="8" height="15" rx="1" fill="#f2f2f2" stroke="#999" stroke-width="1"/><line x1="1863.5" y1="578" x2="1863.5" y2="586" stroke="#999" stroke-width="1"/><line x1="1865.5" y1="578" x2="1865.5" y2="586" stroke="#999" stroke-width="1"/><rect x="1869.5" y="574.5" width="8" height="15" rx="1" fill="#f2f2f2" stroke="#999" stroke-width="1"/><line x1="1872.5" y1="578" x2="1872.5" y2="586" stroke="#999" stroke-width="1"/><line x1="1874.5" y1="578" x2="1874.5" y2="586" stroke="#999" stroke-width="1"/></svg>

<!-- Bottom cards -->
<div class="card" style="left:19px;top:652px;width:612px;height:227px"></div>
<div class="card" style="left:651px;top:652px;width:611px;height:227px"></div>
<div class="card" style="left:1282px;top:652px;width:612px;height:227px"></div>
<div class="abs" style="left:19px;top:704px;width:612px;height:1px;background:#282828"></div>
<div class="abs" style="left:651px;top:704px;width:611px;height:1px;background:#282828"></div>
<div class="abs" style="left:1282px;top:704px;width:612px;height:1px;background:#282828"></div>

<div class="h20" style="left:34px;top:666.3px">HTTP Requests</div>
<div class="h20" style="left:666px;top:666.3px">SSL Connections</div>
<div class="h20" style="left:1297px;top:666.3px">TCP Connections</div>

<svg class="abs" style="left:596px;top:666.5px" width="20" height="20" viewBox="0 0 20 20"><circle cx="10" cy="10" r="9.8" fill="#00bc8c"/><g stroke="#1f1f1f" stroke-width="1.3" fill="none"><line x1="0" y1="6.6" x2="20" y2="6.6"/><line x1="0" y1="13.4" x2="20" y2="13.4"/><ellipse cx="10" cy="10" rx="4.6" ry="10.2"/></g></svg>
<svg class="abs" style="left:1229px;top:666px" width="19" height="21" viewBox="0 0 19 21"><path d="M4.8 9V6.2a4.7 4.7 0 0 1 9.4 0V9" fill="none" stroke="#00bc8c" stroke-width="3.2"/><rect x="1" y="9" width="17" height="11.6" rx="2" fill="#00bc8c"/></svg>
<svg class="abs" style="left:1863px;top:666px" width="17" height="21" viewBox="0 0 17 21"><g fill="#00bc8c"><rect x="3" y="0" width="3.4" height="6.5" rx="1.3"/><rect x="10.6" y="0" width="3.4" height="6.5" rx="1.3"/><rect x="0.5" y="6.3" width="16" height="2.2"/><path d="M1.6 8.4h13.8v1.4a6.9 6.9 0 0 1-5.5 6.8v4.4h-2.8v-4.4a6.9 6.9 0 0 1-5.5-6.8z"/></g></svg>

<div class="sep" style="left:228px"></div><div class="sep" style="left:422px"></div>
<div class="sep" style="left:860px"></div><div class="sep" style="left:1054px"></div>
<div class="sep" style="left:1491px"></div><div class="sep" style="left:1685px"></div>

<div class="lab" style="left:34px">Rate</div><div class="lab" style="left:228px">Error Rate</div><div class="lab" style="left:422px">Total</div>
<div class="big" style="left:34px">107/s</div><div class="big" style="left:228px">9/s</div><div class="big" style="left:422px">254.67M</div>
<div class="sub" style="left:34px">-</div><div class="sub" style="left:228px">22/s</div><div class="sub" style="left:422px">171/s</div>

<div class="lab" style="left:666px">Rate</div><div class="lab" style="left:860px">#Conn</div><div class="lab" style="left:1054px">Total</div>
<div class="big" style="left:666px">0/s</div><div class="big" style="left:860px">0</div><div class="big" style="left:1054px">0</div>
<div class="sub" style="left:666px">-</div><div class="sub" style="left:860px">-</div><div class="sub" style="left:1054px">-</div>

<div class="lab" style="left:1297px">Rate</div><div class="lab" style="left:1491px">#Conn</div><div class="lab" style="left:1685px">Total</div>
<div class="big" style="left:1297px">107/s</div><div class="big" style="left:1491px">3</div><div class="big" style="left:1685px">254.67M</div>
<div class="sub" style="left:1297px">-</div><div class="sub" style="left:1491px">6.00k</div><div class="sub" style="left:1685px">171/s</div>

<div class="abs foot">HAProxy Enterprise Real Time Dashboard v1.1.2 © 2017-2019HAProxy Technologies, LLC. All Rights Reserved.</div>
<svg class="abs" style="left:0;top:0" width="1925" height="921" font-family="Liberation Sans, sans-serif"><circle cx="231.4" cy="232.0" r="16" fill="#fff" stroke="#ee1c25" stroke-width="3"/><text x="231.5" y="239.0" text-anchor="middle" font-size="14" font-weight="bold" fill="#ee1c25" stroke="#ee1c25" stroke-width="0.4">1</text><circle cx="867.6" cy="232.5" r="16" fill="#fff" stroke="#ee1c25" stroke-width="3"/><text x="866.9" y="237.2" text-anchor="middle" font-size="14" font-weight="bold" fill="#ee1c25" stroke="#ee1c25" stroke-width="0.4">2</text><circle cx="1461.5" cy="232.1" r="16" fill="#fff" stroke="#ee1c25" stroke-width="3"/><text x="1460.9" y="238.7" text-anchor="middle" font-size="14" font-weight="bold" fill="#ee1c25" stroke="#ee1c25" stroke-width="0.4">3</text><circle cx="226.4" cy="675.4" r="16" fill="#fff" stroke="#ee1c25" stroke-width="3"/><text x="227.0" y="681.0" text-anchor="middle" font-size="14" font-weight="bold" fill="#ee1c25" stroke="#ee1c25" stroke-width="0.4">4</text><circle cx="868.4" cy="676.3" r="16" fill="#fff" stroke="#ee1c25" stroke-width="3"/><text x="868.9" y="683.0" text-anchor="middle" font-size="14" font-weight="bold" fill="#ee1c25" stroke="#ee1c25" stroke-width="0.4">5</text><circle cx="1488.4" cy="674.4" r="16" fill="#fff" stroke="#ee1c25" stroke-width="3"/><text x="1488.0" y="680.0" text-anchor="middle" font-size="14" font-weight="bold" fill="#ee1c25" stroke="#ee1c25" stroke-width="0.4">6</text></svg>
</body></html>
